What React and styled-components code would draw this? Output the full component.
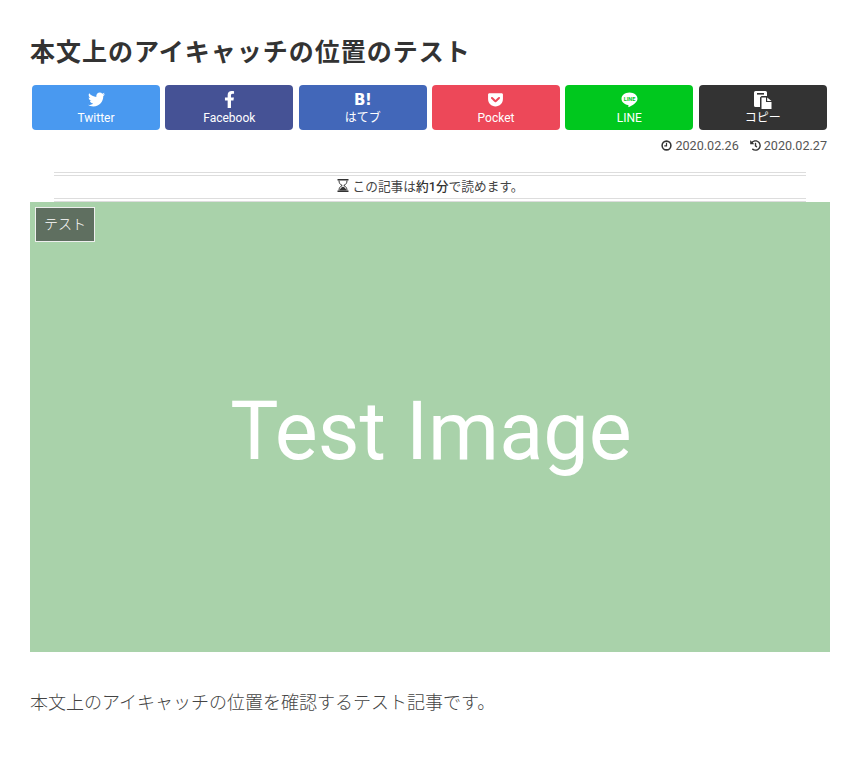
import React from "react";
import styled, { createGlobalStyle } from "styled-components";
import { FaTwitter, FaFacebookF, FaGetPocket, FaHistory } from "react-icons/fa";

const GlobalStyle = createGlobalStyle`
  html, body {
    margin: 0;
    padding: 0;
    background: #fff;
  }
  body {
    font-family: Roboto, "Noto Sans CJK JP", sans-serif;
    color: #333;
  }
`;

const Page = styled.main`
  width: 800px;
  height: 730px;
  padding: 30px 30px 0;
`;

const Title = styled.h1`
  margin: 0;
  font-size: 25px;
  line-height: 46px;
  font-weight: 700;
  letter-spacing: 1px;
  color: #333;
`;

const ShareRow = styled.div`
  display: grid;
  grid-template-columns: repeat(6, 128px);
  gap: 5.333px;
  margin: 9px 0 0 2px;
`;

const ShareButton = styled.a`
  height: 45px;
  border-radius: 4px;
  background: ${(p) => p.$bg};
  color: #fff;
  display: flex;
  flex-direction: column;
  align-items: center;
  font-size: 12px;
  line-height: 14px;
  padding-top: 5px;
  box-sizing: border-box;
`;

const ShareIcon = styled.span`
  height: 19px;
  font-size: 17px;
  display: flex;
  align-items: center;
  justify-content: center;
  margin-bottom: 2px;
`;

const HatenaMark = styled.b`
  font-family: "DejaVu Sans", sans-serif;
  font-size: 15px;
  font-weight: 700;
  letter-spacing: -0.5px;
`;

const Dates = styled.div`
  display: flex;
  justify-content: flex-end;
  gap: 11px;
  margin: 8px 3px 0 0;
  font-size: 12.6px;
  line-height: 15px;
  color: #555;
`;

const DateItem = styled.span`
  display: inline-flex;
  align-items: center;
  gap: 3px;
  svg {
    width: 11px;
    height: 11px;
    color: #333;
  }
`;

const ReadTime = styled.div`
  width: 752px;
  height: 30px;
  margin: 19px auto 0;
  padding-bottom: 3px;
  box-sizing: border-box;
  border-top: 4px double #ddd;
  border-bottom: 4px double #ddd;
  display: flex;
  align-items: center;
  justify-content: center;
  gap: 4px;
  font-size: 12.7px;
  color: #444;
  b {
    font-weight: 500;
    color: #333;
  }
`;

const Eyecatch = styled.div`
  position: relative;
  height: 450px;
  background: #a9d2aa;
  display: flex;
  align-items: center;
  justify-content: center;
`;

const Placeholder = styled.span`
  font-family: Roboto, sans-serif;
  font-weight: 400;
  font-size: 81px;
  line-height: 1;
  margin: 8px 0 0 2px;
  color: #fff;
`;

const CatLabel = styled.span`
  position: absolute;
  top: 5px;
  left: 5px;
  width: 60px;
  height: 35px;
  padding-bottom: 3px;
  box-sizing: border-box;
  border: 1px solid #eee;
  background: #5f6f60;
  color: #fff;
  font-size: 14px;
  font-weight: 300;
  display: flex;
  align-items: center;
  justify-content: center;
`;

const Body = styled.p`
  margin: 38px 0 0;
  font-size: 18px;
  font-weight: 300;
  line-height: 26px;
  color: #444;
`;

const LineIcon = () => (
  <svg width="17" height="16" viewBox="0 0 17 16">
    <path
      fill="#fff"
      d="M8.5 0.5C4 0.5 0.5 3.3 0.5 6.8c0 3.1 2.8 5.7 6.5 6.2.5.1.6.4.5.8l-.2 1c-.1.4.2.6.7.3 2.5-1.3 8.5-4.2 8.5-8.3C16.5 3.3 13 .5 8.5 .5z"
    />
    <text x="8.5" y="8.8" textAnchor="middle" fontSize="5.5" fontWeight="700" fill="#00c81e">LINE</text>
  </svg>
);

const CopyIcon = () => (
  <svg width="18" height="18" viewBox="0 0 18 18">
    <path fill="#fff" d="M1.5 0h10A1.5 1.5 0 0 1 13 1.5V5H7.5L6 6.5V16H1.5A1.5 1.5 0 0 1 0 14.5v-13A1.5 1.5 0 0 1 1.5 0z" />
    <rect x="3" y="2" width="7" height="1.6" fill="#333" />
    <path fill="#fff" d="M7.5 6.5H12V11h5.5v7h-10z" />
    <path fill="#fff" d="M13.2 6.5l4.3 3.5h-4.3z" />
  </svg>
);

const ClockIcon = () => (
  <svg viewBox="0 0 12 12" fill="none" stroke="currentColor">
    <circle cx="6" cy="6" r="4.8" strokeWidth="1.7" />
    <path d="M6 3v3.4H3.6" strokeWidth="1.3" />
  </svg>
);

const HourglassIcon = () => (
  <svg width="12" height="13" viewBox="0 0 12 13">
    <path fill="#333" d="M0.5 0h11v1.6h-11zM0.5 11.4h11V13h-11z" />
    <path
      fill="none"
      stroke="#333"
      strokeWidth="1"
      d="M2 1.6c0 2.6 1.3 4 3.2 4.9-1.9.9-3.2 2.3-3.2 4.9M10 1.6c0 2.6-1.3 4-3.2 4.9 1.9.9 3.2 2.3 3.2 4.9"
    />
    <path fill="#333" d="M2.6 11.4c.2-1.7 1.7-3 3.4-3.6 1.7.6 3.2 1.9 3.4 3.6z" />
  </svg>
);

const buttons = [
  { label: "Twitter", bg: "#4999f0", icon: <FaTwitter /> },
  { label: "Facebook", bg: "#455295", icon: <FaFacebookF /> },
  { label: "はてブ", bg: "#4267b9", icon: <HatenaMark>B!</HatenaMark> },
  { label: "Pocket", bg: "#ed4859", icon: <FaGetPocket /> },
  { label: "LINE", bg: "#00c81e", icon: <LineIcon /> },
  { label: "コピー", bg: "#333", icon: <CopyIcon /> },
];

export default function App() {
  return (
    <Page>
      <GlobalStyle />
      <Title>本文上のアイキャッチの位置のテスト</Title>
      <ShareRow>
        {buttons.map((b) => (
          <ShareButton key={b.label} $bg={b.bg}>
            <ShareIcon>{b.icon}</ShareIcon>
            {b.label}
          </ShareButton>
        ))}
      </ShareRow>
      <Dates>
        <DateItem><ClockIcon />2020.02.26</DateItem>
        <DateItem><FaHistory />2020.02.27</DateItem>
      </Dates>
      <ReadTime>
        <HourglassIcon />
        <span>この記事は<b>約1分</b>で読めます。</span>
      </ReadTime>
      <Eyecatch>
        <CatLabel>テスト</CatLabel>
        <Placeholder>Test Image</Placeholder>
      </Eyecatch>
      <Body>本文上のアイキャッチの位置を確認するテスト記事です。</Body>
    </Page>
  );
}
